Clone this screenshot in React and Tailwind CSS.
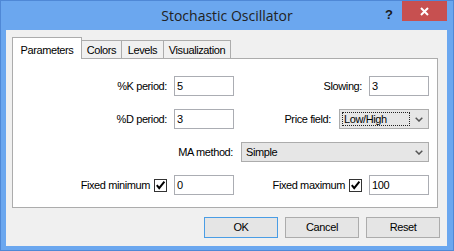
import React from "react";

function Check() {
  return (
    <span className="w-[13px] h-[13px] border border-[#333333] bg-white flex items-center justify-center shrink-0">
      <svg width="11" height="11" viewBox="0 0 11 11">
        <path d="M1.8 5.2 L4.2 8.2 L9.4 1.6" fill="none" stroke="#000" strokeWidth="2" />
      </svg>
    </span>
  );
}

function Chevron() {
  return (
    <svg width="8" height="5" viewBox="0 0 8 5" className="shrink-0">
      <path d="M0.7 0.7 L4 4 L7.3 0.7" fill="none" stroke="#555" strokeWidth="1.5" />
    </svg>
  );
}

function Field({ value }) {
  return (
    <div className="h-[20px] w-full border border-[#abadb3] bg-white flex items-center pl-[2px] text-[#000]">
      {value}
    </div>
  );
}

export default function App() {
  return (
    <div className="w-[454px] h-[251px] bg-[#6ba7ef] border border-[#4f88d6] flex flex-col font-['Liberation_Sans',Arial,sans-serif] text-[11px] tracking-[-0.4px] text-black overflow-hidden">
      {/* title bar */}
      <div className="relative h-[29px] shrink-0 flex items-center justify-center">
        <span className="font-['Open_Sans',sans-serif] text-[14px] tracking-normal text-[#222222] leading-none pt-[1px]">
          Stochastic Oscillator
        </span>
        <span className="absolute left-[384px] top-[4px] font-['Liberation_Sans',Arial,sans-serif] font-bold text-[13px] tracking-normal text-[#1a1a1a]">
          ?
        </span>
        <div className="absolute left-[401px] top-0 w-[45px] h-[20px] bg-[#c75050] flex items-center justify-center">
          <svg width="9" height="9" viewBox="0 0 9 9">
            <path d="M1 1 L8 8 M8 1 L1 8" stroke="#fff" strokeWidth="2" />
          </svg>
        </div>
      </div>

      {/* client */}
      <div className="ml-[5px] w-[441px] h-[216px] bg-[#f0f0f0] pl-[6px] pt-[7px] flex flex-col">
        {/* tabs */}
        <div className="h-[21px] flex items-end">
          <div className="relative z-10 w-[70px] h-[22px] -mb-px bg-white border-l border-t border-r border-[#acacac] flex items-start justify-center pt-[4px]">
            Parameters
          </div>
          <div className="w-[40px] h-[18px] bg-[#f0f0f0] border-t border-r border-[#acacac] flex items-center justify-center pt-[1px]">
            Colors
          </div>
          <div className="w-[42px] h-[18px] bg-[#f0f0f0] border-t border-r border-[#acacac] flex items-center justify-center pt-[1px]">
            Levels
          </div>
          <div className="w-[67px] h-[18px] bg-[#f0f0f0] border-t border-r border-[#acacac] flex items-center justify-center pt-[1px]">
            Visualization
          </div>
        </div>

        {/* panel */}
        <div className="w-[426px] h-[150px] bg-white border border-[#acacac] pt-[17px]">
          <div className="grid grid-cols-[154px_60px_121px_60px] gap-x-[7px] gap-y-[13px] auto-rows-[20px] items-center">
            {/* row 1 */}
            <div className="text-right">%K period:</div>
            <Field value="5" />
            <div className="text-right">Slowing:</div>
            <Field value="3" />

            {/* row 2 */}
            <div className="text-right">%D period:</div>
            <Field value="3" />
            <div className="col-span-2 flex items-center justify-end gap-[8px]">
              <span>Price field:</span>
              <div className="w-[90px] h-[20px] border border-[#acacac] bg-[#e6e6e6] flex items-center justify-between pl-[2px] pr-[5px]">
                <span className="w-[68px] h-[14px] border border-dotted border-[#222] flex items-center pl-[1px]">
                  Low/High
                </span>
                <Chevron />
              </div>
            </div>

            {/* row 3 */}
            <div className="col-span-2 text-right pr-[1px]">MA method:</div>
            <div className="col-span-2 h-[20px] border border-[#acacac] bg-[#e6e6e6] flex items-center justify-between pl-[4px] pr-[5px]">
              <span>Simple</span>
              <Chevron />
            </div>

            {/* row 4 */}
            <div className="flex items-center justify-end gap-[4px]">
              <span>Fixed minimum</span>
              <Check />
            </div>
            <Field value="0" />
            <div className="flex items-center justify-end gap-[4px]">
              <span>Fixed maximum</span>
              <Check />
            </div>
            <Field value="100" />
          </div>
        </div>

        {/* buttons */}
        <div className="mt-[9px] flex justify-end gap-[7px] pr-[7px]">
          <div className="w-[74px] h-[21px] border border-[#4a9de5] bg-[#e5e5e5] flex items-center justify-center">
            OK
          </div>
          <div className="w-[74px] h-[21px] border border-[#acacac] bg-[#e5e5e5] flex items-center justify-center">
            Cancel
          </div>
          <div className="w-[74px] h-[21px] border border-[#acacac] bg-[#e5e5e5] flex items-center justify-center">
            Reset
          </div>
        </div>
      </div>
    </div>
  );
}
